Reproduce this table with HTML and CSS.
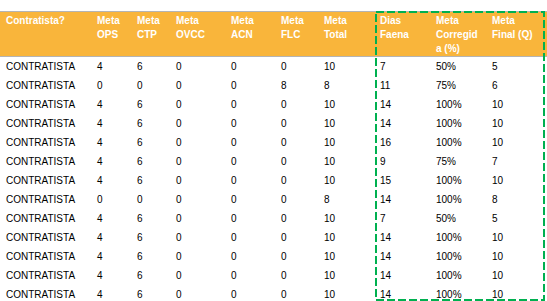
FILE: index.html
```html
<!DOCTYPE html>
<html lang="en">
<head>
  <meta charset="UTF-8" />
  <title>Metas Contratistas</title>
  <link rel="stylesheet" href="styles.css">
</head>
<body>

<div class="sheet">
  <table class="metas">
    <colgroup>
      <col class="c-name">
      <col class="c-ops">
      <col class="c-ctp">
      <col class="c-ovcc">
      <col class="c-acn">
      <col class="c-flc">
      <col class="c-total">
      <col class="c-dias">
      <col class="c-corr">
      <col class="c-final">
    </colgroup>
    <thead>
      <tr>
        <th>Contratista?</th>
        <th>Meta<br>OPS</th>
        <th>Meta<br>CTP</th>
        <th>Meta<br>OVCC</th>
        <th>Meta<br>ACN</th>
        <th>Meta<br>FLC</th>
        <th>Meta<br>Total</th>
        <th>Dias<br>Faena</th>
        <th>Meta<br>Corregid<br>a (%)</th>
        <th>Meta<br>Final (Q)</th>
      </tr>
    </thead>
    <tbody>
      <tr><td>CONTRATISTA</td><td>4</td><td>6</td><td>0</td><td>0</td><td>0</td><td>10</td><td>7</td><td>50%</td><td>5</td></tr>
      <tr><td>CONTRATISTA</td><td>0</td><td>0</td><td>0</td><td>0</td><td>8</td><td>8</td><td>11</td><td>75%</td><td>6</td></tr>
      <tr><td>CONTRATISTA</td><td>4</td><td>6</td><td>0</td><td>0</td><td>0</td><td>10</td><td>14</td><td>100%</td><td>10</td></tr>
      <tr><td>CONTRATISTA</td><td>4</td><td>6</td><td>0</td><td>0</td><td>0</td><td>10</td><td>14</td><td>100%</td><td>10</td></tr>
      <tr><td>CONTRATISTA</td><td>4</td><td>6</td><td>0</td><td>0</td><td>0</td><td>10</td><td>16</td><td>100%</td><td>10</td></tr>
      <tr><td>CONTRATISTA</td><td>4</td><td>6</td><td>0</td><td>0</td><td>0</td><td>10</td><td>9</td><td>75%</td><td>7</td></tr>
      <tr><td>CONTRATISTA</td><td>4</td><td>6</td><td>0</td><td>0</td><td>0</td><td>10</td><td>15</td><td>100%</td><td>10</td></tr>
      <tr><td>CONTRATISTA</td><td>0</td><td>0</td><td>0</td><td>0</td><td>0</td><td>8</td><td>14</td><td>100%</td><td>8</td></tr>
      <tr><td>CONTRATISTA</td><td>4</td><td>6</td><td>0</td><td>0</td><td>0</td><td>10</td><td>7</td><td>50%</td><td>5</td></tr>
      <tr><td>CONTRATISTA</td><td>4</td><td>6</td><td>0</td><td>0</td><td>0</td><td>10</td><td>14</td><td>100%</td><td>10</td></tr>
      <tr><td>CONTRATISTA</td><td>4</td><td>6</td><td>0</td><td>0</td><td>0</td><td>10</td><td>14</td><td>100%</td><td>10</td></tr>
      <tr><td>CONTRATISTA</td><td>4</td><td>6</td><td>0</td><td>0</td><td>0</td><td>10</td><td>14</td><td>100%</td><td>10</td></tr>
      <tr><td>CONTRATISTA</td><td>4</td><td>6</td><td>0</td><td>0</td><td>0</td><td>10</td><td>14</td><td>100%</td><td>10</td></tr>
    </tbody>
  </table>

  <!-- dashed highlight round the last three columns -->
  <svg class="highlight" width="170" height="290" viewBox="0 0 170 290">
    <rect x="1" y="1" width="168" height="288" fill="none" stroke="#00b050" stroke-width="2" stroke-dasharray="8 3"/>
  </svg>
</div>

</body>
</html>
```

FILE: styles.css
```css
body {
  margin: 0;
  background: #fff;
  font-family: "Liberation Sans", Arial, sans-serif;
  font-size: 10px;
  color: #000;
  overflow: hidden;
}

.sheet {
  position: relative;
  padding-top: 11px;
}

.metas {
  border-collapse: collapse;
  table-layout: fixed;
  width: 547px;
}

.c-name { width: 91px; }
.c-ops { width: 40px; }
.c-ctp { width: 39px; }
.c-ovcc { width: 55px; }
.c-acn { width: 50px; }
.c-flc { width: 43px; }
.c-total { width: 56px; }
.c-dias { width: 56px; }
.c-corr { width: 56px; }
.c-final { width: 61px; }

.metas th {
  background: #f9b53b;
  color: #fff;
  font-weight: bold;
  text-align: left;
  vertical-align: top;
  height: 40px;
  padding: 2px 6px 0;
  line-height: 14px;
  border-top: 1px solid #b4b4b4;
  border-bottom: 1px solid #b4b4b4;
  box-sizing: border-box;
  white-space: nowrap;
}

.metas td {
  height: 19px;
  padding: 1px 6px 0;
  line-height: 18px;
  box-sizing: border-box;
  white-space: nowrap;
}

.highlight {
  position: absolute;
  left: 375px;
  top: 11px;
}
```
